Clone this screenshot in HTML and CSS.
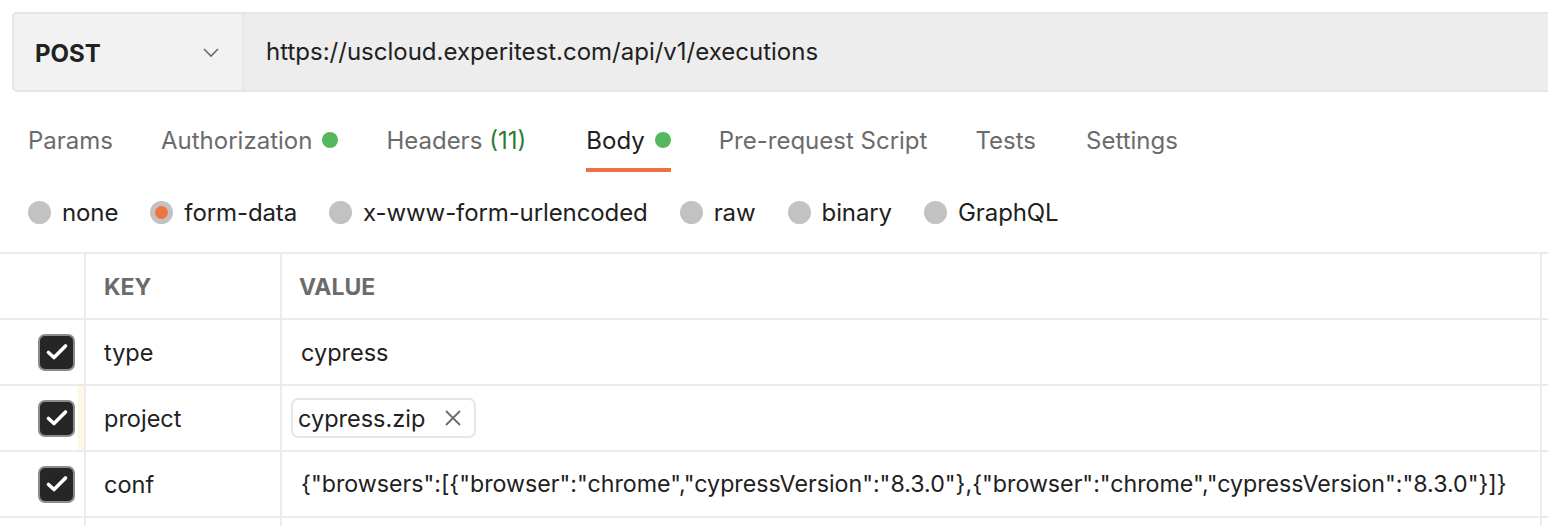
FILE: index.html
```html
<!DOCTYPE html>
<html>
<head>
<meta charset="utf-8">
<link rel="stylesheet" href="styles.css">
</head>
<body>
<div class="page">
  <div class="urlbar">
    <div class="method">
      <span class="method-name">POST</span>
      <svg class="chev" width="18" height="12" viewBox="0 0 18 12"><path d="M2 3 L9 10 L16 3" fill="none" stroke="#6b6b6b" stroke-width="1.6"/></svg>
    </div>
    <div class="url">https://uscloud.experitest.com/api/v1/executions</div>
  </div>

  <div class="tabs">
    <div class="tab">Params</div>
    <div class="tab">Authorization <span class="dot"></span></div>
    <div class="tab headers">Headers <span class="count">(11)</span></div>
    <div class="tab active">Body <span class="dot"></span></div>
    <div class="tab">Pre-request Script</div>
    <div class="tab tests">Tests</div>
    <div class="tab">Settings</div>
  </div>

  <div class="radios">
    <div class="radio"><span class="circle"></span>none</div>
    <div class="radio"><span class="circle on"></span>form-data</div>
    <div class="radio"><span class="circle"></span>x-www-form-urlencoded</div>
    <div class="radio"><span class="circle"></span>raw</div>
    <div class="radio"><span class="circle"></span>binary</div>
    <div class="radio"><span class="circle"></span>GraphQL</div>
  </div>

  <div class="table">
    <div class="row head">
      <div class="cell c0"></div>
      <div class="cell c1">KEY</div>
      <div class="cell c2">VALUE</div>
      <div class="cell c3"></div>
    </div>
    <div class="row">
      <div class="cell c0"><span class="check"><svg width="24" height="20" viewBox="0 0 24 20"><path d="M3.5 10.5 L9 15.5 L20.5 4" fill="none" stroke="#fff" stroke-width="3.6" stroke-linecap="round" stroke-linejoin="round"/></svg></span></div>
      <div class="cell c1">type</div>
      <div class="cell c2 val">cypress</div>
      <div class="cell c3"></div>
    </div>
    <div class="row">
      <div class="cell c0 marked"><span class="check"><svg width="24" height="20" viewBox="0 0 24 20"><path d="M3.5 10.5 L9 15.5 L20.5 4" fill="none" stroke="#fff" stroke-width="3.6" stroke-linecap="round" stroke-linejoin="round"/></svg></span></div>
      <div class="cell c1">project</div>
      <div class="cell c2 file"><span class="chip">cypress.zip <svg class="x" width="18" height="18" viewBox="0 0 18 18"><path d="M2 2 L16 16 M16 2 L2 16" stroke="#6b6b6b" stroke-width="1.8"/></svg></span></div>
      <div class="cell c3"></div>
    </div>
    <div class="row">
      <div class="cell c0"><span class="check"><svg width="24" height="20" viewBox="0 0 24 20"><path d="M3.5 10.5 L9 15.5 L20.5 4" fill="none" stroke="#fff" stroke-width="3.6" stroke-linecap="round" stroke-linejoin="round"/></svg></span></div>
      <div class="cell c1">conf</div>
      <div class="cell c2 val conf">{"browsers":[{"browser":"chrome","cypressVersion":"8.3.0"},{"browser":"chrome","cypressVersion":"8.3.0"}]}</div>
      <div class="cell c3"></div>
    </div>
    <div class="row last">
      <div class="cell c0"></div>
      <div class="cell c1"></div>
      <div class="cell c2"></div>
      <div class="cell c3"></div>
    </div>
  </div>
</div>
</body>
</html>
```
FILE: styles.css
```css
* { box-sizing: border-box; }
html, body { margin: 0; padding: 0; background: #fff; overflow: hidden; }
body {
  font-family: Inter, "Noto Sans", sans-serif;
  font-size: 24px;
  color: #212121;
  width: 1548px;
  height: 526px;
}
.page { padding-top: 12px; }

.urlbar {
  display: flex;
  margin-left: 12px;
  height: 80px;
  border: 2px solid #e6e6e6;
  border-right: none;
  border-radius: 5px 0 0 5px;
  background: #ededed;
}
.method {
  width: 230px;
  flex: none;
  display: flex;
  align-items: center;
  justify-content: space-between;
  padding: 0 22px 0 21px;
  background: #f2f2f2;
  border-right: 2px solid #e6e6e6;
  border-radius: 4px 0 0 4px;
}
.method-name { font-weight: 700; font-size: 24px; color: #212121; padding-top: 2px; }
.url {
  display: flex;
  align-items: center;
  padding-left: 22px;
  font-size: 24px;
  color: #212121;
  padding-bottom: 2px;
}

.tabs {
  display: flex;
  gap: 48px;
  padding-left: 28px;
  height: 80px;
}
.tab {
  display: flex;
  align-items: center;
  padding-top: 20px;
  color: #6b6b6b;
  border-bottom: 4px solid transparent;
  height: 80px;
  white-space: nowrap;
}
.tab.headers { margin-right: 12px; }
.tab.tests { margin-right: 2px; }
.tab.active { color: #212121; border-bottom-color: #ee7043; }
.dot {
  display: inline-block;
  width: 16px; height: 16px;
  border-radius: 50%;
  background: #55b85f;
  margin-left: 10px;
}
.count { color: #2d7a31; margin-left: 7px; }

.radios {
  display: flex;
  align-items: center;
  height: 80px;
  padding-left: 28px;
  padding-top: 1px;
  gap: 32px;
}
.radio { display: flex; align-items: center; color: #212121; letter-spacing: -0.1px; }
.circle {
  width: 23px; height: 23px;
  border-radius: 50%;
  background: #c2c2c2;
  margin-right: 11px;
  display: flex; align-items: center; justify-content: center;
}
.circle.on::after {
  content: "";
  width: 13px; height: 13px;
  border-radius: 50%;
  background: #f0763f;
}

.table { border-top: 2px solid #ebebeb; }
.row {
  display: flex;
  height: 66px;
  border-bottom: 2px solid #ebebeb;
}
.row.last { height: 8px; border-bottom: none; }
.cell {
  display: flex;
  align-items: center;
  border-right: 2px solid #ebebeb;
  white-space: nowrap;
  font-size: 23.5px;
}
.c0 { width: 86px; justify-content: flex-end; padding-right: 9px; position: relative; }
.c1 { width: 196px; padding-left: 18px; }
.c2 { width: 1260px; padding-left: 17px; }
.c3 { flex: 1; border-right: none; }
.head .cell { font-weight: 700; color: #6b6b6b; font-size: 23px; }
.head .c1, .head .c2 { padding-top: 2px; }
.val { padding-left: 19px; }
.conf { font-size: 23.2px; }
.file { padding-left: 9px; }
.marked::after {
  content: "";
  position: absolute;
  right: 0; top: 0; bottom: 0;
  width: 6px;
  background: #fff7e5;
}
.check {
  width: 37px; height: 37px;
  border-radius: 7px;
  background: #262626;
  border: 2px solid #8c8c8c;
  display: flex; align-items: center; justify-content: center;
}
.chip {
  display: inline-flex;
  align-items: center;
  height: 40px;
  padding: 0 12px 0 5px;
  border: 2px solid #e6e6e6;
  border-radius: 7px;
}
.x { margin-left: 19px; }
```
